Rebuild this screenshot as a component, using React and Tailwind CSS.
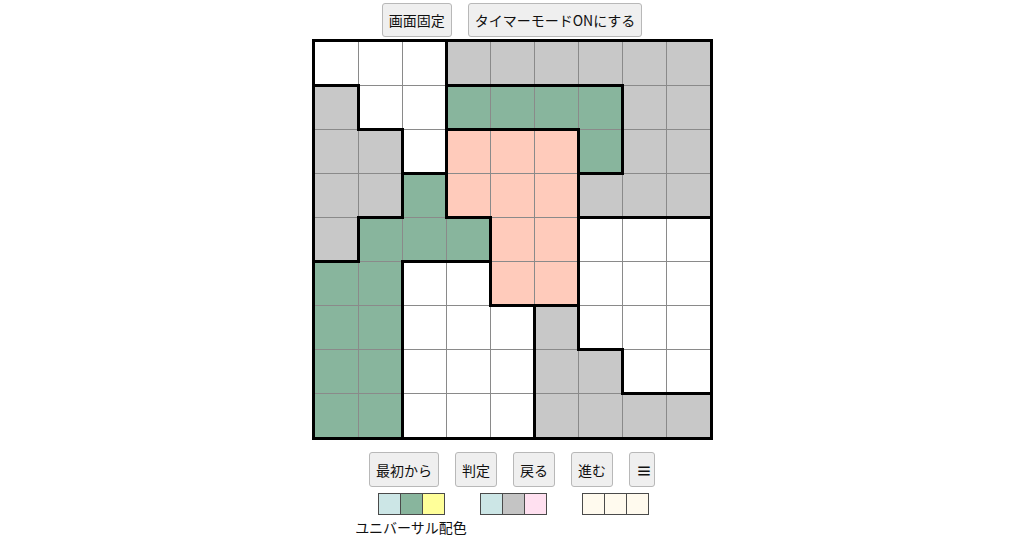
import React from "react";

// W = white, G = gray, N = green, P = pink
const board = [
  "WWWGGGGGG",
  "GWWNNNNGG",
  "GGWPPPNGG",
  "GGNPPPGGG",
  "GNNNPPWWW",
  "NNWWPPWWW",
  "NNWWWGWWW",
  "NNWWWGGWW",
  "NNWWWGGGG",
];

const cellColor = {
  W: "bg-white",
  G: "bg-[#c8c8c8]",
  N: "bg-[#88b59d]",
  P: "bg-[#ffcbbb]",
};

const STEP = 44;

function regionLines() {
  const segs = [];
  for (let r = 0; r < 9; r++) {
    for (let c = 0; c < 9; c++) {
      const v = board[r][c];
      if (c < 8 && board[r][c + 1] !== v) {
        const x = STEP * c + 43.5;
        segs.push([x, STEP * r - 0.5, x, STEP * r + 43.5]);
      }
      if (r < 8 && board[r + 1][c] !== v) {
        const y = STEP * r + 43.5;
        segs.push([STEP * c - 0.5, y, STEP * c + 43.5, y]);
      }
    }
  }
  return segs;
}

function Btn({ children, tall, className = "" }) {
  return (
    <button
      className={
        "border border-[#b8b8b8] bg-[#efefef] rounded-[3px] px-[6px] text-[14px] leading-[20px] text-[#111] " +
        (tall ? "h-[35px] " : "h-[34px] ") +
        className
      }
    >
      {children}
    </button>
  );
}

function Swatches({ colors }) {
  return (
    <div className="flex">
      {colors.map((c, i) => (
        <div
          key={i}
          className={"w-[23px] h-[22px] border border-[#4a4a4a] " + (i > 0 ? "-ml-px " : "") + c}
        />
      ))}
    </div>
  );
}

export default function App() {
  const segs = regionLines();
  return (
    <div
      className="w-[1024px] h-[538px] overflow-hidden bg-white flex flex-col items-center pt-[3px]"
      style={{ fontFamily: '"Noto Sans CJK JP", "Noto Sans", sans-serif' }}
    >
      {/* top buttons */}
      <div className="flex gap-4">
        <Btn>画面固定</Btn>
        <Btn>タイマーモードONにする</Btn>
      </div>

      {/* board */}
      <div className="mt-[2px] border-[3px] border-black">
        <div className="relative grid grid-cols-[repeat(9,43px)] gap-px bg-[#8a8a8a]">
          {board.map((row, r) =>
            row.split("").map((v, c) => (
              <div key={r + "-" + c} className={"w-[43px] h-[43px] " + cellColor[v]} />
            ))
          )}
          <svg className="absolute inset-0 w-[395px] h-[395px]" viewBox="0 0 395 395">
            {segs.map(([x1, y1, x2, y2], i) => (
              <line
                key={i}
                x1={x1}
                y1={y1}
                x2={x2}
                y2={y2}
                stroke="#000"
                strokeWidth="3"
                strokeLinecap="square"
              />
            ))}
          </svg>
        </div>
      </div>

      {/* controls */}
      <div className="flex items-end gap-4 mt-[12px]">
        <Btn tall>最初から</Btn>
        <Btn tall>判定</Btn>
        <Btn tall>戻る</Btn>
        <Btn tall>進む</Btn>
        <Btn tall className="w-[26px] px-0 font-bold text-[16px]">≡</Btn>
      </div>

      {/* colour sets */}
      <div className="flex items-start mt-[6px] pr-[22px]">
        <div className="w-[115px] flex flex-col items-center">
          <Swatches colors={["bg-[#cce6e6]", "bg-[#88b59d]", "bg-[#ffff99]"]} />
          <div className="mt-[2px] text-[14px] leading-[20px] text-[#111] whitespace-nowrap">ユニバーサル配色</div>
        </div>
        <div className="ml-[11px]">
          <Swatches colors={["bg-[#cce6e6]", "bg-[#c4c4c4]", "bg-[#ffe0f0]"]} />
        </div>
        <div className="ml-[35px]">
          <Swatches colors={["bg-[#fffaee]", "bg-[#fffaee]", "bg-[#fffaee]"]} />
        </div>
      </div>
    </div>
  );
}
